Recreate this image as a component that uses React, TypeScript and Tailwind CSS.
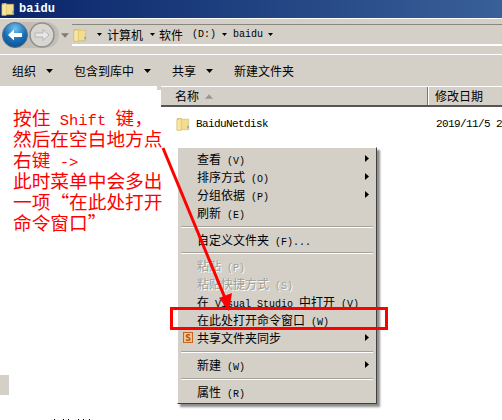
const cjk = { fontFamily: '"Noto Sans CJK SC", "Liberation Mono", monospace' };

const FolderIcon = ({ className }: { className?: string }) => (
  <svg viewBox="0 0 16 16" className={className}>
    <path d="M1 1.5h4.5l1 1.5v11.5l-4.5 1H1z" fill="#d9b75a" />
    <path d="M5 2.5h9.5v12H5z" fill="#f3dc8c" stroke="#c9a84c" strokeWidth="0.5" />
    <path d="M1 3l5-1.5v14L1 15z" fill="#f7e7a6" stroke="#c9a84c" strokeWidth="0.5" />
    <rect x="13" y="10" width="1.4" height="3" fill="#4aa3df" />
  </svg>
);

const Caret = ({ className }: { className?: string }) => (
  <svg viewBox="0 0 7 4" className={className}>
    <path d="M0 0h7L3.5 4z" fill="#000" />
  </svg>
);

const Latin = ({ children, className }: { children: React.ReactNode; className?: string }) => (
  <span className={className} style={{ fontFamily: '"Liberation Mono", monospace' }}>
    {children}
  </span>
);

const NavButtons = () => (
  <div className="flex items-center rounded-full bg-[#c2beb6] w-[57px] h-[26px] ml-[2px]">
    <svg viewBox="0 0 26 26" className="w-[26px] h-[26px] shrink-0">
      <defs>
        <radialGradient id="backBlue" cx="50%" cy="25%" r="80%">
          <stop offset="0%" stopColor="#6ec3ee" />
          <stop offset="55%" stopColor="#1a6fb5" />
          <stop offset="100%" stopColor="#0a4d8f" />
        </radialGradient>
      </defs>
      <circle cx="13" cy="13" r="12.5" fill="url(#backBlue)" stroke="#5c6f82" />
      <path d="M6 13l6-5.5v3.5h8v4h-8v3.5z" fill="#fff" />
    </svg>
    <svg viewBox="0 0 26 26" className="w-[26px] h-[26px] shrink-0 ml-[1px]">
      <circle cx="13" cy="13" r="12" fill="#d8d6d0" stroke="#8f8f8f" strokeWidth="1.5" />
      <path d="M20 13l-6-5.5v3.5H6v4h8v3.5z" fill="#e8e8e8" stroke="#aaa" strokeWidth="0.8" />
    </svg>
  </div>
);

const ToolbarItem = ({ label, caret }: { label: string; caret?: boolean }) => (
  <div className="flex items-center">
    <span>{label}</span>
    {caret && <Caret className="w-[7px] h-[4px] ml-[10px]" />}
  </div>
);

type MenuRow =
  | { sep: true; h: string }
  | { label: React.ReactNode; arrow?: boolean; disabled?: boolean; icon?: boolean };

const M = ({ children }: { children: React.ReactNode }) => (
  <Latin className="text-[10px] leading-none">{children}</Latin>
);

const menuRows: MenuRow[] = [
  { label: <>查看<M> (V)</M></>, arrow: true },
  { label: <>排序方式<M> (O)</M></>, arrow: true },
  { label: <>分组依据<M> (P)</M></>, arrow: true },
  { label: <>刷新<M> (E)</M></> },
  { sep: true, h: "h-[9px]" },
  { label: <>自定义文件夹<M> (F)...</M></> },
  { sep: true, h: "h-[8px]" },
  { label: <>粘贴<M> (P)</M></>, disabled: true },
  { label: <>粘贴快捷方式<M> (S)</M></>, disabled: true },
  { label: <>在<M> Visual Studio </M>中打开<M> (V)</M></> },
  { label: <>在此处打开命令窗口<M> (W)</M></> },
  { label: <>共享文件夹同步</>, arrow: true, icon: true },
  { sep: true, h: "h-[9px]" },
  { label: <>新建<M> (W)</M></>, arrow: true },
  { sep: true, h: "h-[9px]" },
  { label: <>属性<M> (R)</M></> },
];

const ContextMenu = () => (
  <div
    className="absolute left-[177px] top-[147px] w-[200px] bg-[#d4d0c8] border-t border-l border-t-white border-l-white border-r border-b border-r-[#404040] border-b-[#404040] shadow-[3px_3px_2px_rgba(0,0,0,0.45)] py-[2px] text-[12px] text-black"
    style={cjk}
  >
    {menuRows.map((row, i) =>
      "sep" in row ? (
        <div key={i} className={`${row.h} flex items-center px-[3px]`}>
          <div className="w-full h-[2px] bg-[#a5a29b] border-b border-b-white" />
        </div>
      ) : (
        <div
          key={i}
          className={`h-[18px] relative flex items-center pl-[19px] pr-2 whitespace-pre ${
            row.disabled ? "text-[#a09d96] [text-shadow:1px_1px_0_#fff]" : ""
          }`}
        >
          {row.icon && (
            <div className="absolute left-[5px] top-[3px] w-[10px] h-[11px] bg-[#f2c78c] border border-[#c8641e] flex items-center justify-center text-[9px] leading-none font-bold text-[#c04a14]">
              S
            </div>
          )}
          <span>{row.label}</span>
          {row.arrow && (
            <svg viewBox="0 0 4 7" className="absolute right-[7px] top-[5px] w-[4px] h-[7px]">
              <path d="M0 0l4 3.5L0 7z" fill="#000" />
            </svg>
          )}
        </div>
      )
    )}
  </div>
);

const NoteLatin = ({ children }: { children: React.ReactNode }) => (
  <Latin className="text-[15.5px] leading-none">{children}</Latin>
);

const Note = () => (
  <div
    className="absolute left-[13px] top-[106px] w-[152px] flex flex-col text-[18.7px] leading-[21px] text-[#ff0000] whitespace-pre"
    style={cjk}
  >
    <div className="h-[21px]">按住<NoteLatin> Shift </NoteLatin>键，</div>
    <div className="h-[21px]">然后在空白地方点</div>
    <div className="h-[21px]">右键<NoteLatin> -&gt;</NoteLatin></div>
    <div className="h-[21px]">此时菜单中会多出</div>
    <div className="h-[21px]">一项<span className="inline-block w-[18.7px] text-right">“</span>在此处打开</div>
    <div className="h-[21px]">命令窗口<span className="inline-block w-[18.7px] text-left">”</span></div>
  </div>
);

const dotGaps = [0, 8, 4, 9, 4, 5];

export default function App() {
  return (
    <div className="relative w-[502px] h-[420px] overflow-hidden bg-white text-black" style={cjk}>
      {/* title bar */}
      <div className="h-[18px] flex items-center bg-gradient-to-r from-[#0a246a] to-[#3a6098] pl-[1px]">
        <FolderIcon className="w-[14px] h-[16px]" />
        <Latin className="ml-[4px] text-[12px] leading-none font-bold text-white">baidu</Latin>
      </div>
      <div className="h-[2px] bg-[#d4d0c8] border-t border-t-white" />

      {/* nav row */}
      <div className="h-[34px] bg-[#d4d0c8] flex items-center pb-[4px]">
        <NavButtons />
        <Caret className="w-[8px] h-[5px] ml-[2px] opacity-40" />
        <div className="ml-[3px] flex-1 h-[22px] flex items-center border-t border-t-[#8a8780] border-b-2 border-b-white text-[12px] whitespace-pre">
          <FolderIcon className="w-[14px] h-[16px] ml-[1px]" />
          <Caret className="w-[5px] h-[3px] ml-[10px]" />
          <span className="ml-[5px]">计算机</span>
          <Caret className="w-[5px] h-[3px] ml-[7px]" />
          <span className="ml-[4px]">软件</span>
          <Latin className="ml-[9px] text-[10px]">(D:)</Latin>
          <Caret className="w-[5px] h-[3px] ml-[6px]" />
          <Latin className="ml-[6px] text-[10px]">baidu</Latin>
          <Caret className="w-[5px] h-[3px] ml-[5px]" />
        </div>
      </div>

      {/* toolbar */}
      <div className="h-[32px] bg-[#d4d0c8] border-t border-t-white flex items-center pl-[12px] gap-[21px] text-[12px]">
        <ToolbarItem label="组织" caret />
        <ToolbarItem label="包含到库中" caret />
        <ToolbarItem label="共享" caret />
        <ToolbarItem label="新建文件夹" />
      </div>

      {/* body */}
      <div className="flex h-[334px]">
        <div className="w-[161px] shrink-0 flex flex-col bg-white">
          <div className="mt-[289px] w-[9px] h-[20px] bg-[#d4d0c8]" />
        </div>
        <div className="flex-1 flex flex-col">
          <div className="h-[21px] flex items-center bg-[#d4d0c8] border-t border-t-white border-b-2 border-b-[#555] text-[12px]">
            <div className="w-[267px] flex items-center pl-[14px] border-r border-r-[#777] h-full">
              <span>名称</span>
              <svg viewBox="0 0 7 4" className="w-[8px] h-[5px] ml-[6px]">
                <path d="M0 4h7L3.5 0z" fill="#9a978f" />
              </svg>
            </div>
            <div className="w-px h-full bg-white" />
            <span className="ml-[6px]">修改日期</span>
          </div>
          <div className="flex items-center h-[16px] mt-[9px] pl-[15px] relative">
            <FolderIcon className="w-[14px] h-[16px]" />
            <Latin className="ml-[6px] text-[11px] tracking-[-0.6px]">BaiduNetdisk</Latin>
            <Latin className="absolute left-[275px] text-[11px] tracking-[-0.6px] whitespace-pre">2019/11/5 2</Latin>
          </div>
        </div>
      </div>

      {/* notch where the toolbar meets the column header */}
      <div className="absolute left-[157px] top-[86px] w-[4px] h-[4px] bg-[#d4d0c8]" />

      <ContextMenu />

      {/* annotations */}
      <Note />
      <svg viewBox="0 0 502 420" className="absolute left-0 top-0 w-[502px] h-[420px] pointer-events-none">
        <path d="M163 148L225 298" stroke="#ff0000" strokeWidth="3" fill="none" />
        <path d="M229 311L219 298L232 293z" fill="#ff0000" />
      </svg>
      <div className="absolute left-[170px] top-[307px] w-[218px] h-[23px] border-[3px] border-[#ff0000]" />

      {/* tops of a line of text cut off by the crop */}
      <div className="absolute left-[54px] top-[419px] flex">
        {dotGaps.map((gap, i) => (
          <div key={i} className="w-[1px] h-[1px] bg-black" style={{ marginLeft: gap }} />
        ))}
      </div>
    </div>
  );
}
